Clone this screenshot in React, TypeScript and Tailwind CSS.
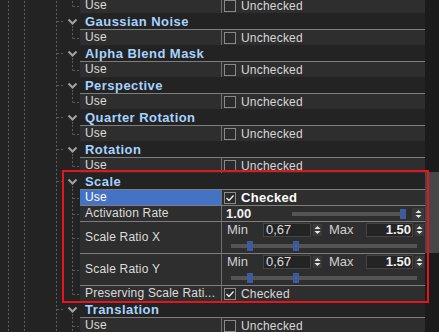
import React from 'react';

const Gutter = ({ tall, group, last }: { tall?: boolean; group?: boolean; last?: boolean }) => {
    const h = tall ? 32 : 16;
    const mid = group ? 8.5 : Math.floor(h / 2) + 1.5;
    return (
        <svg width={80} height={h} className="block shrink-0">
            <g stroke="#5c5c5c" strokeWidth={1} strokeDasharray="2 2">
                <line x1={8.5} y1={0} x2={8.5} y2={h} />
                <line x1={24.5} y1={0} x2={24.5} y2={h} />
                <line x1={56.5} y1={0} x2={56.5} y2={h} />
                {group ? (
                    <>
                        <line x1={57} y1={mid} x2={63} y2={mid} />
                        <line x1={72.5} y1={13} x2={72.5} y2={h} />
                    </>
                ) : (
                    <>
                        <line x1={72.5} y1={0} x2={72.5} y2={last ? mid : h} />
                        <line x1={73} y1={mid} x2={80} y2={mid} />
                    </>
                )}
            </g>
            {group && (
                <path d="M68.5 6.5 L72.5 10.5 L76.5 6.5" fill="none" stroke="#a3a3a3" strokeWidth={2} />
            )}
        </svg>
    );
};

const GroupRow = ({ title }: { title: string }) => (
    <div className="flex h-[16px] items-center">
        <Gutter group />
        <span className="pl-[5px] text-[13px] font-bold leading-none tracking-[0.45px] text-[#a6d3ff]">{title}</span>
    </div>
);

const PropRow = ({
    label,
    tall,
    last,
    selected,
    children,
}: {
    label: string;
    tall?: boolean;
    last?: boolean;
    selected?: boolean;
    children: React.ReactNode;
}) => (
    <div className={tall ? 'flex h-[32px]' : 'flex h-[16px]'}>
        <Gutter tall={tall} last={last} />
        <div className="flex flex-1 border-t border-[#7d7d7d] bg-[#2e2e2e]">
            <div
                className={
                    selected
                        ? 'flex w-[141px] items-center whitespace-nowrap bg-[#4472c4] pb-[1px] pl-[5px] text-[12px] tracking-[0.2px] text-white'
                        : 'flex w-[141px] items-center whitespace-nowrap pb-[1px] pl-[5px] text-[12px] tracking-[0.2px] text-[#dcdcdc]'
                }
            >
                {label}
            </div>
            <div className="flex flex-1 border-l border-[#6f6f6f]">{children}</div>
        </div>
    </div>
);

const CheckBox = ({ checked, bold }: { checked?: boolean; bold?: boolean }) => (
    <div className="flex items-center pl-[2px]">
        <div className="flex h-[12px] w-[12px] items-center justify-center border border-[#8a8a8a] bg-[#2a2a2a]">
            {checked && (
                <svg width={10} height={10} viewBox="0 0 10 10">
                    <path d="M1.5 5 L4 7.5 L8.5 2.5" fill="none" stroke="#f0f0f0" strokeWidth={1.3} />
                </svg>
            )}
        </div>
        <span
            className={
                bold
                    ? 'pl-[5px] text-[13px] font-bold tracking-[0.3px] text-white'
                    : 'pl-[5px] text-[12px] tracking-[0.2px] text-[#d8d8d8]'
            }
        >
            {checked ? 'Checked' : 'Unchecked'}
        </span>
    </div>
);

const Spin = ({ wide }: { wide?: boolean }) => (
    <div
        className={
            wide
                ? 'flex h-[12px] w-[12px] items-center justify-center bg-[#3a3a3a]'
                : 'flex h-[12px] w-[9px] items-center justify-center bg-[#3a3a3a]'
        }
    >
        <svg width={7} height={10} viewBox="0 0 7 10">
            <path d="M0.5 4 L3.5 1 L6.5 4 Z M0.5 6 L3.5 9 L6.5 6 Z" fill="#e6e6e6" />
        </svg>
    </div>
);

const RangeRow = () => (
    <div className="flex flex-1 flex-col">
        <div className="flex h-[16px] items-center text-[13px] text-[#d0d0d0]">
            <span className="w-[41px] pl-[5px]">Min</span>
            <div className="flex h-[14px] w-[48px] items-center border border-[#444] bg-[#242424] pl-[2px] text-[13px] text-[#dcdcdc]">
                0,67
            </div>
            <div className="ml-[2px]">
                <Spin />
            </div>
            <span className="ml-[7px] w-[37px]">Max</span>
            <div className="flex h-[14px] w-[47px] items-center justify-end border border-[#444] bg-[#242424] pr-[1px] text-[13px] font-bold text-[#f0f0f0]">
                1.50
            </div>
            <div className="ml-[2px]">
                <Spin />
            </div>
        </div>
        <div className="flex flex-1 items-center pl-[9px]">
            <div className="relative h-[4px] w-[186px] bg-[#555555]">
                <div className="absolute left-[16px] top-[-3px] h-[10px] w-[6px] bg-[#3e5c9a]" />
                <div className="absolute left-[62px] top-[-3px] h-[10px] w-[6px] bg-[#3e5c9a]" />
            </div>
        </div>
    </div>
);

export default function App() {
    return (
        <div className="relative flex h-[332px] w-[439px] overflow-hidden bg-[#232323] font-['Liberation_Sans',Arial,sans-serif]">
            <div className="-mt-[3px] flex w-[425px] shrink-0 flex-col">
                <PropRow label="Use" last>
                    <CheckBox />
                </PropRow>
                <GroupRow title="Gaussian Noise" />
                <PropRow label="Use" last>
                    <CheckBox />
                </PropRow>
                <GroupRow title="Alpha Blend Mask" />
                <PropRow label="Use" last>
                    <CheckBox />
                </PropRow>
                <GroupRow title="Perspective" />
                <PropRow label="Use" last>
                    <CheckBox />
                </PropRow>
                <GroupRow title="Quarter Rotation" />
                <PropRow label="Use" last>
                    <CheckBox />
                </PropRow>
                <GroupRow title="Rotation" />
                <PropRow label="Use" last>
                    <CheckBox />
                </PropRow>
                <GroupRow title="Scale" />
                <PropRow label="Use" selected>
                    <CheckBox checked bold />
                </PropRow>
                <PropRow label="Activation Rate">
                    <div className="flex flex-1 items-center">
                        <span className="w-[70px] pl-[4px] text-[13px] font-bold text-[#f0f0f0]">1.00</span>
                        <div className="relative h-[4px] w-[114px] bg-[#555555]">
                            <div className="absolute right-0 top-[-3px] h-[10px] w-[6px] bg-[#3e5c9a]" />
                        </div>
                        <div className="ml-[6px]">
                            <Spin wide />
                        </div>
                    </div>
                </PropRow>
                <PropRow label="Scale Ratio X" tall>
                    <RangeRow />
                </PropRow>
                <PropRow label="Scale Ratio Y" tall>
                    <RangeRow />
                </PropRow>
                <PropRow label="Preserving Scale Rati..." last>
                    <CheckBox checked />
                </PropRow>
                <GroupRow title="Translation" />
                <PropRow label="Use">
                    <CheckBox />
                </PropRow>
            </div>

            {/* scrollbar */}
            <div className="flex flex-1 flex-col bg-[#1b1b1b] pt-[172px]">
                <div className="h-[81px] bg-[#474747]" />
            </div>

            {/* highlight frame */}
            <div className="pointer-events-none absolute left-[62px] top-[170px] h-[133px] w-[367px] border-2 border-[#e3161f]" />
        </div>
    );
}
